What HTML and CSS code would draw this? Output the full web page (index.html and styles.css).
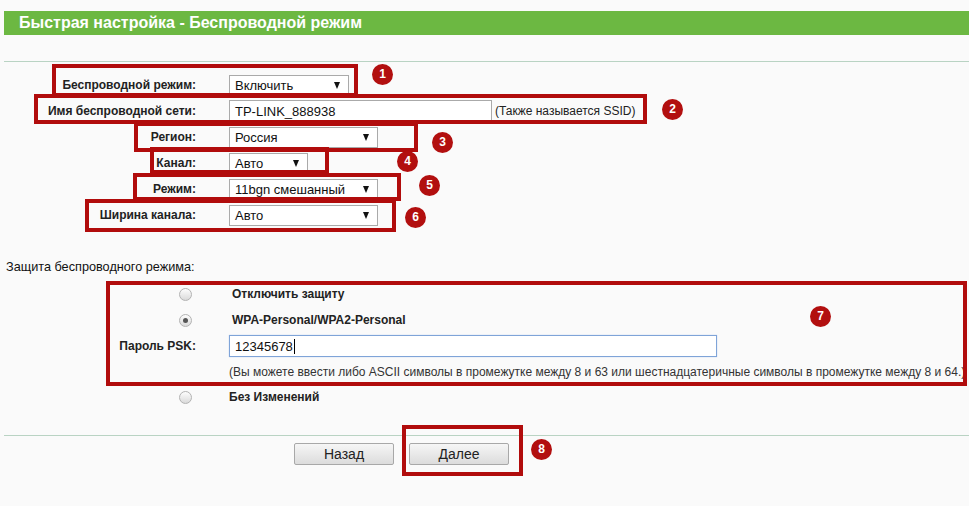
FILE: index.html
```html
<!DOCTYPE html>
<html lang="ru">
<head>
<meta charset="utf-8">
<title>Быстрая настройка - Беспроводной режим</title>
<link rel="stylesheet" href="styles.css">
</head>
<body>
<div class="page">
  <div class="titlebar">Быстрая настройка - Беспроводной режим</div>
  <div class="rule rule-top"></div>

  <div class="form">
    <div class="row">
      <div class="lbl">Беспроводной режим:</div>
      <div class="field"><div class="select w-s"><span>Включить</span><span class="arrow"></span></div></div>
    </div>
    <div class="row">
      <div class="lbl">Имя беспроводной сети:</div>
      <div class="field"><div class="input w-ssid">TP-LINK_888938</div><span class="note">(Также называется SSID)</span></div>
    </div>
    <div class="row">
      <div class="lbl">Регион:</div>
      <div class="field"><div class="select w-l"><span>Россия</span><span class="arrow"></span></div></div>
    </div>
    <div class="row">
      <div class="lbl">Канал:</div>
      <div class="field"><div class="select w-xs"><span>Авто</span><span class="arrow"></span></div></div>
    </div>
    <div class="row">
      <div class="lbl">Режим:</div>
      <div class="field"><div class="select w-l"><span>11bgn смешанный</span><span class="arrow"></span></div></div>
    </div>
    <div class="row">
      <div class="lbl">Ширина канала:</div>
      <div class="field"><div class="select w-l"><span>Авто</span><span class="arrow"></span></div></div>
    </div>
  </div>

  <div class="section-title">Защита беспроводного режима:</div>

  <div class="form sec">
    <div class="row">
      <div class="lbl"><span class="radio"></span></div>
      <div class="field opt ind">Отключить защиту</div>
    </div>
    <div class="row">
      <div class="lbl"><span class="radio checked"></span></div>
      <div class="field opt ind">WPA-Personal/WPA2-Personal</div>
    </div>
    <div class="row">
      <div class="lbl">Пароль PSK:</div>
      <div class="field"><div class="input focus w-psk">12345678<span class="caret"></span></div></div>
    </div>
    <div class="row hint-row">
      <div class="lbl"></div>
      <div class="field hint">(Вы можете ввести либо ASCII символы в промежутке между 8 и 63 или шестнадцатеричные символы в промежутке между 8 и 64.)</div>
    </div>
    <div class="row">
      <div class="lbl"><span class="radio"></span></div>
      <div class="field opt">Без Изменений</div>
    </div>
  </div>

  <div class="rule rule-bottom"></div>

  <div class="buttons">
    <button class="btn">Назад</button>
    <button class="btn">Далее</button>
  </div>
</div>

<div class="mark box1"></div>
<div class="mark box2"></div>
<div class="mark box3"></div>
<div class="mark box4"></div>
<div class="mark box5"></div>
<div class="mark box6"></div>
<div class="mark box7"></div>
<div class="mark box8"></div>

<div class="num n1">1</div>
<div class="num n2">2</div>
<div class="num n3">3</div>
<div class="num n4">4</div>
<div class="num n5">5</div>
<div class="num n6">6</div>
<div class="num n7">7</div>
<div class="num n8">8</div>
</body>
</html>
```
FILE: styles.css
```css
* { box-sizing: border-box; }
html, body {
  margin: 0;
  padding: 0;
  background: #fafafa;
}
body {
  font-family: "Liberation Sans", Arial, sans-serif;
  color: #222;
  width: 969px;
  height: 506px;
  overflow: hidden;
  position: relative;
}
.page {
  padding-left: 4px;
  padding-top: 11px;
}
.titlebar {
  height: 24px;
  line-height: 24px;
  background: #6cb842;
  color: #fff;
  font-weight: bold;
  font-size: 16px;
  padding-left: 15px;
}
.rule {
  height: 1px;
  background: #3a7f57;
  border-bottom: 1px solid #b9d3c3;
}
.rule-top { margin-top: 26px; }

.form { margin-top: 10px; }
.form.sec { margin-top: 0; }
.row {
  display: grid;
  grid-template-columns: 192px 1fr;
  column-gap: 33px;
  height: 26px;
  align-items: center;
}
.lbl {
  text-align: right;
  font-weight: bold;
  font-size: 12px;
  display: flex;
  justify-content: flex-end;
  align-items: center;
}
.field {
  display: flex;
  align-items: center;
  font-size: 13px;
}
.select, .input {
  height: 21px;
  background: #fff;
  border: 1px solid #aaaaaa;
  font-size: 13px;
  color: #111;
  display: flex;
  align-items: center;
  padding-left: 5px;
}
.select {
  justify-content: space-between;
  padding-right: 8px;
}
.arrow {
  width: 0;
  height: 0;
  border-left: 3.5px solid transparent;
  border-right: 3.5px solid transparent;
  border-top: 7px solid #111;
}
.w-s { width: 120px; }
.w-l { width: 149px; }
.w-xs { width: 79px; }
.w-ssid { width: 263px; height: 22px; }
.w-psk { width: 488px; height: 22px; }
.input.focus {
  border-color: #7fa4d8;
  box-shadow: 0 0 1px #a9c4ea;
}
.caret {
  display: inline-block;
  width: 1px;
  height: 15px;
  background: #000;
  margin-left: 1px;
}
.note {
  margin-left: 3px;
  font-size: 12px;
  color: #222;
}

.section-title {
  margin-top: 26px;
  height: 27px;
  line-height: 26px;
  padding-left: 2px;
  font-size: 12.7px;
  color: #111;
}
.opt {
  font-weight: bold;
  font-size: 12px;
}
.opt.ind { padding-left: 3px; }
.hint-row { height: 25px; }
.hint {
  font-size: 12px;
  color: #333;
  white-space: nowrap;
}
.radio {
  width: 13px;
  height: 13px;
  border-radius: 50%;
  border: 1px solid #b3b3b3;
  background: linear-gradient(#fdfdfd, #dadada);
  margin-right: 4px;
  display: flex;
  align-items: center;
  justify-content: center;
}
.radio.checked::after {
  content: "";
  width: 5px;
  height: 5px;
  border-radius: 50%;
  background: #555;
}

.rule-bottom { margin-top: 25px; }
.buttons {
  display: flex;
  gap: 15px;
  padding-left: 290px;
  margin-top: 7px;
}
.btn {
  width: 100px;
  height: 22px;
  border: 1px solid #a8a8a8;
  border-radius: 2px;
  background: linear-gradient(#f6f6f6, #dcdcdc);
  font-family: "Liberation Sans", Arial, sans-serif;
  font-size: 14px;
  color: #222;
  padding: 0;
}

/* annotations */
.mark {
  position: absolute;
  border: 4px solid #b10c0c;
}
.box1 { left: 52px; top: 64px; width: 306px; height: 33px; }
.box2 { left: 34px; top: 94px; width: 613px; height: 30px; }
.box3 { left: 134px; top: 122px; width: 284px; height: 30px; }
.box4 { left: 150px; top: 147px; width: 179px; height: 27px; }
.box5 { left: 133px; top: 173px; width: 268px; height: 28px; }
.box6 { left: 85px; top: 199px; width: 311px; height: 33px; }
.box7 { left: 106px; top: 281px; width: 861px; height: 105px; }
.box8 { left: 402px; top: 425px; width: 121px; height: 51px; }

.num {
  position: absolute;
  width: 21px;
  height: 21px;
  border-radius: 50%;
  background: #b20f0f;
  color: #fff;
  font-weight: bold;
  font-size: 12px;
  line-height: 21px;
  text-align: center;
}
.n1 { left: 372px; top: 64px; }
.n2 { left: 662px; top: 99px; }
.n3 { left: 432px; top: 132px; }
.n4 { left: 397px; top: 151px; }
.n5 { left: 419px; top: 175px; }
.n6 { left: 405px; top: 207px; }
.n7 { left: 810px; top: 306px; }
.n8 { left: 531px; top: 439px; }
```
